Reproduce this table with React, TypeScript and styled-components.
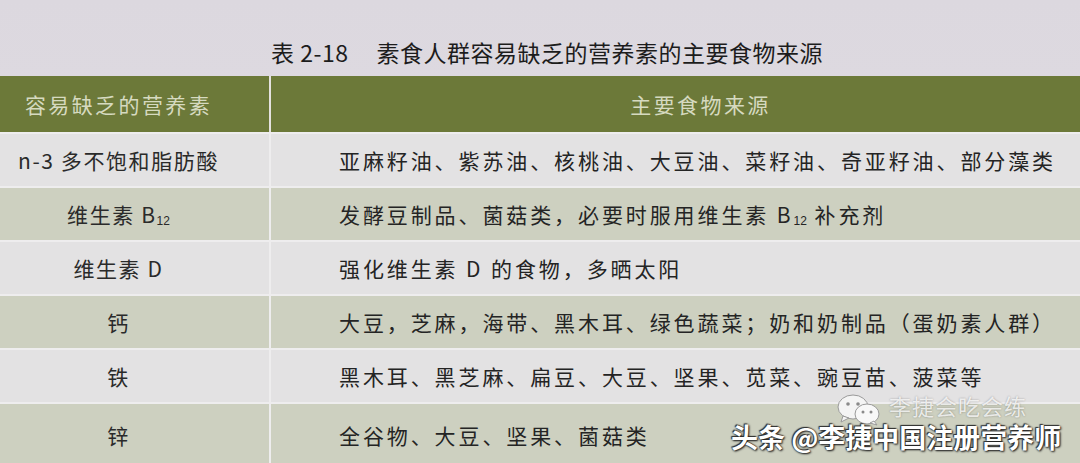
import React from "react";
import styled, { createGlobalStyle } from "styled-components";

const GlobalStyle = createGlobalStyle`
  html, body {
    margin: 0;
    padding: 0;
    background: #dedae0;
  }
  body {
    font-family: "Noto Sans CJK SC", "Noto Sans", sans-serif;
    color: #262626;
  }
`;

type Tone = "light" | "green";

interface Item {
  nutrient: React.ReactNode;
  sources: React.ReactNode;
}

const B12 = () => (
  <>
    B<Sub>12</Sub>
  </>
);

const items: Item[] = [
  {
    nutrient: "n-3 多不饱和脂肪酸",
    sources: "亚麻籽油、紫苏油、核桃油、大豆油、菜籽油、奇亚籽油、部分藻类",
  },
  {
    nutrient: (
      <>
        维生素 <B12 />
      </>
    ),
    sources: (
      <>
        发酵豆制品、菌菇类，必要时服用维生素 <B12 /> 补充剂
      </>
    ),
  },
  { nutrient: "维生素 D", sources: "强化维生素 D 的食物，多晒太阳" },
  {
    nutrient: "钙",
    sources: "大豆，芝麻，海带、黑木耳、绿色蔬菜；奶和奶制品（蛋奶素人群）",
  },
  {
    nutrient: "铁",
    sources: "黑木耳、黑芝麻、扁豆、大豆、坚果、苋菜、豌豆苗、菠菜等",
  },
  { nutrient: "锌", sources: "全谷物、大豆、坚果、菌菇类" },
];

export default function App() {
  return (
    <Page>
      <GlobalStyle />
      <Title>
        表 2-18<TitleGap />素食人群容易缺乏的营养素的主要食物来源
      </Title>
      <Table>
        <HeadRow>
          <HeadCell>容易缺乏的营养素</HeadCell>
          <HeadCell wide>主要食物来源</HeadCell>
        </HeadRow>
        {items.map((item, i) => (
          <Row key={i} tone={i % 2 === 0 ? "light" : "green"} last={i === items.length - 1}>
            <NutrientCell>
              <span>{item.nutrient}</span>
            </NutrientCell>
            <SourceCell>
              <span>{item.sources}</span>
            </SourceCell>
          </Row>
        ))}
      </Table>
      <Watermark>
        <WeChatMark>
          <WeChatIcon />
          <MarkName>李捷会吃会练</MarkName>
        </WeChatMark>
        <Byline>头条 @李捷中国注册营养师</Byline>
      </Watermark>
    </Page>
  );
}

const WeChatIcon = () => (
  <svg width="44" height="32" viewBox="0 0 44 32">
    <ellipse cx="16" cy="13" rx="15" ry="12" fill="#f4f4f4" stroke="#9a9a9a" strokeWidth="1" />
    <path d="M6 22 L4 28 L12 24 Z" fill="#f4f4f4" stroke="#9a9a9a" strokeWidth="1" />
    <circle cx="11" cy="10" r="1.8" fill="#8a8a8a" />
    <circle cx="21" cy="10" r="1.8" fill="#8a8a8a" />
    <ellipse cx="30" cy="20" rx="12" ry="10" fill="#f8f8f8" stroke="#9a9a9a" strokeWidth="1" />
    <path d="M37 27 L40 31 L33 29 Z" fill="#f8f8f8" stroke="#9a9a9a" strokeWidth="1" />
    <circle cx="26" cy="18" r="1.5" fill="#8a8a8a" />
    <circle cx="34" cy="18" r="1.5" fill="#8a8a8a" />
  </svg>
);

const Page = styled.div`
  position: relative;
  width: 1080px;
  height: 463px;
  overflow: hidden;
  background: linear-gradient(180deg, #dcd8df 0%, #e2dee4 100%);
`;

const Title = styled.div`
  height: 76px;
  padding-top: 37px;
  box-sizing: border-box;
  text-align: center;
  padding-left: 14px;
  font-size: 23px;
  line-height: 30px;
  letter-spacing: 0.5px;
  color: #1c1c1c;
`;

const TitleGap = styled.span`
  display: inline-block;
  width: 28px;
`;

const Table = styled.div`
  display: flex;
  flex-direction: column;
  gap: 2px;
  background: #eeedee;
`;

const HeadRow = styled.div`
  display: grid;
  grid-template-columns: 269px 1fr;
  column-gap: 2px;
  height: 56px;
  background: #e4e2df;
`;

const HeadCell = styled.div<{ wide?: boolean }>`
  display: flex;
  align-items: center;
  justify-content: center;
  padding: ${({ wide }) => (wide ? "0 0 0 50px" : "0 32px 0 0")};
  background: #6c7939;
  color: #d6dac0;
  font-size: 21px;
  letter-spacing: 2.4px;
`;

const Row = styled.div<{ tone: Tone; last?: boolean }>`
  display: grid;
  grid-template-columns: 269px 1fr;
  column-gap: 2px;
  height: ${({ last }) => (last ? "62px" : "52px")};
  background: #eeedee;

  & > div {
    background: ${({ tone }) => (tone === "light" ? "#e3e2e3" : "#cdd0c0")};
  }
`;

const NutrientCell = styled.div`
  display: flex;
  align-items: center;
  justify-content: center;
  padding-right: 32px;
  font-size: 21px;
  letter-spacing: 1.6px;
  color: #2a2a2a;
  white-space: nowrap;
`;

const SourceCell = styled.div`
  display: flex;
  align-items: center;
  padding-left: 68px;
  font-size: 21px;
  letter-spacing: 2.9px;
  color: #242424;
  white-space: nowrap;
`;

const Sub = styled.sub`
  font-family: "Liberation Sans", sans-serif;
  font-size: 12px;
  letter-spacing: 0;
  vertical-align: -2px;
  line-height: 0;
`;

const Watermark = styled.div`
  position: absolute;
  left: 731px;
  top: 394px;
  width: 340px;
  height: 62px;
  pointer-events: none;
`;

const WeChatMark = styled.div`
  position: absolute;
  left: 106px;
  top: 0;
  display: flex;
  align-items: center;
  gap: 8px;
`;

const MarkName = styled.span`
  font-size: 22px;
  line-height: 22px;
  letter-spacing: 1px;
  color: rgba(255, 255, 255, 0.8);
  text-shadow: 0 0 2px rgba(0, 0, 0, 0.35);
  margin-top: -10px;
`;

const Byline = styled.div`
  position: absolute;
  left: 0;
  top: 29px;
  font-size: 27px;
  font-weight: 700;
  line-height: 28px;
  color: #ffffff;
  white-space: nowrap;
  text-shadow: 0 0 2px #222, 1px 1px 2px #222, -1px -1px 1px #333;
`;
